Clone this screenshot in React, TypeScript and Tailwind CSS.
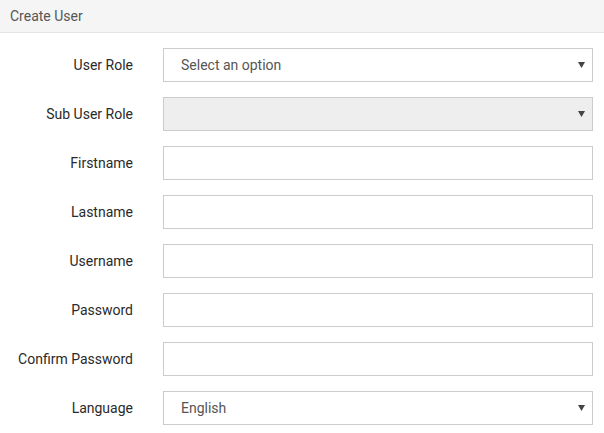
import { ReactNode } from 'react';

type Field = {
  label: string;
  kind: 'select' | 'input';
  value?: string;
  disabled?: boolean;
};

const FIELDS: Field[] = [
  { label: 'User Role', kind: 'select', value: 'Select an option' },
  { label: 'Sub User Role', kind: 'select', value: '', disabled: true },
  { label: 'Firstname', kind: 'input' },
  { label: 'Lastname', kind: 'input' },
  { label: 'Username', kind: 'input' },
  { label: 'Password', kind: 'input' },
  { label: 'Confirm Password', kind: 'input' },
  { label: 'Language', kind: 'select', value: 'English' },
];

function Caret() {
  return (
    <svg width="7" height="6" viewBox="0 0 7 6" className="shrink-0">
      <path d="M0 0 H7 L3.5 6 Z" fill="#444" />
    </svg>
  );
}

function Row({ label, children }: { label: string; children: ReactNode }) {
  return (
    <div className="flex items-center">
      <label className="w-[133px] shrink-0 text-right text-[14px] font-normal text-[#2a2a2a]">
        {label}
      </label>
      <div className="ml-[30px] flex-1">{children}</div>
    </div>
  );
}

export default function App() {
  return (
    <div
      className="h-[433px] w-[604px] overflow-hidden bg-white"
      style={{ fontFamily: 'Roboto, "Liberation Sans", sans-serif' }}
    >
      <div className="flex h-[33px] items-center border-b border-[#e3e3e3] bg-[#f5f5f5] px-[10px] text-[14px] text-[#555]">
        Create User
      </div>

      <div className="flex flex-col gap-[15px] pr-[11px] pt-[15px]">
        {FIELDS.map((f) => (
          <Row key={f.label} label={f.label}>
            {f.kind === 'select' ? (
              <div
                className={`flex h-[34px] items-center justify-between border border-[#cccccc] pl-[17px] pr-[7px] text-[14px] text-[#555] ${
                  f.disabled ? 'bg-[#eeeeee]' : 'bg-white'
                }`}
              >
                <span>{f.value}</span>
                <Caret />
              </div>
            ) : (
              <input
                type={f.label.includes('Password') ? 'password' : 'text'}
                className="block h-[34px] w-full border border-[#cccccc] bg-white px-[17px] text-[14px] text-[#555] outline-none"
              />
            )}
          </Row>
        ))}
      </div>
    </div>
  );
}
